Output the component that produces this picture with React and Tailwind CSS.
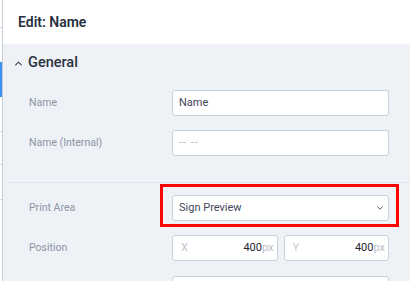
import React from 'react';

const font = { fontFamily: 'Roboto, "Noto Sans", sans-serif' };

const Field = ({ label, children }) => (
  <div className="flex items-center h-[26px] shrink-0">
    <div className="w-[169px] shrink-0 pl-[26px] text-[10.5px] text-[#8b95a7]">{label}</div>
    <div className="w-[217px] shrink-0">{children}</div>
  </div>
);

const Box = ({ children, className = '' }) => (
  <div className={`h-[26px] bg-white border border-[#c9d3e0] rounded-[3px] flex items-center px-[6px] text-[11px] ${className}`}>
    {children}
  </div>
);

const Chevron = ({ up, className = '' }) => (
  <svg viewBox="0 0 10 6" className={className} fill="none" stroke="currentColor" strokeWidth="1.6" strokeLinecap="round" strokeLinejoin="round">
    <path d={up ? 'M1 5 L5 1 L9 5' : 'M1 1 L5 5 L9 1'} />
  </svg>
);

export default function App() {
  return (
    <div className="w-[410px] h-[281px] flex overflow-hidden bg-white" style={font}>
      {/* left rail */}
      <div className="w-[3px] shrink-0 flex flex-col border-r border-[#c5cfdc]">
        <div className="h-[28px] shrink-0 border-b border-[#d3dae4]" />
        <div className="h-[34px] shrink-0" />
        <div className="h-[35px] shrink-0 bg-[#3d8ff2]" />
        <div className="h-[35px] shrink-0 border-b border-[#d3dae4]" />
        <div className="h-[33px] shrink-0 border-b border-[#d3dae4]" />
        <div className="h-[35px] shrink-0 border-b border-[#d3dae4]" />
        <div className="flex-1" />
      </div>

      <div className="flex-1 flex flex-col min-h-0">
        <div className="h-[44px] shrink-0 flex items-center pl-[15px] text-[14px] font-semibold text-[#26303e]">Edit: Name</div>

        <div className="flex-1 min-h-0 bg-[#eef1f5] pt-[11px]">
          <div className="flex items-center h-[16px] pl-[12px] gap-[6px] text-[#2a3342]">
            <Chevron up className="w-[7px] h-[5px] text-[#3a4352]" />
            <span className="text-[14.5px] font-medium">General</span>
          </div>

          <div className="mt-[19px] flex flex-col gap-[14px]">
            <Field label="Name">
              <Box className="text-[#3f4858]">Name</Box>
            </Field>
            <Field label="Name (Internal)">
              <Box className="text-[#b3bac6] tracking-[1px]">-- --</Box>
            </Field>
          </div>

          <div className="mt-[26px] ml-[6px] border-t border-[#dde3ea]" />

          <div className="mt-[12px] flex flex-col gap-[14px]">
            <Field label="Print Area">
              <div className="relative">
                <div className="absolute left-[-12px] right-[-10px] top-[-11px] bottom-[-6px] border-[3px] border-[#ff0000]" />
                <Box className="relative justify-between text-[#3f4858] pr-[5px]">
                  <span>Sign Preview</span>
                  <Chevron className="w-[6px] h-[4px] text-[#4a5363]" />
                </Box>
              </div>
            </Field>
            <Field label="Position">
              <div className="flex gap-[6px]">
                <Box className="flex-1 pl-[8px] pr-[3px]">
                  <span className="text-[#c2c8d2]">X</span>
                  <span className="ml-auto text-[#1f2733]">400</span>
                  <span className="text-[#b9c0cb]">px</span>
                </Box>
                <Box className="flex-1 pl-[8px] pr-[3px]">
                  <span className="text-[#c2c8d2]">Y</span>
                  <span className="ml-auto text-[#1f2733]">400</span>
                  <span className="text-[#b9c0cb]">px</span>
                </Box>
              </div>
            </Field>
            <div className="mt-[1px]">
              <Field label="">
                <Box />
              </Field>
            </div>
          </div>
        </div>
      </div>
    </div>
  );
}
